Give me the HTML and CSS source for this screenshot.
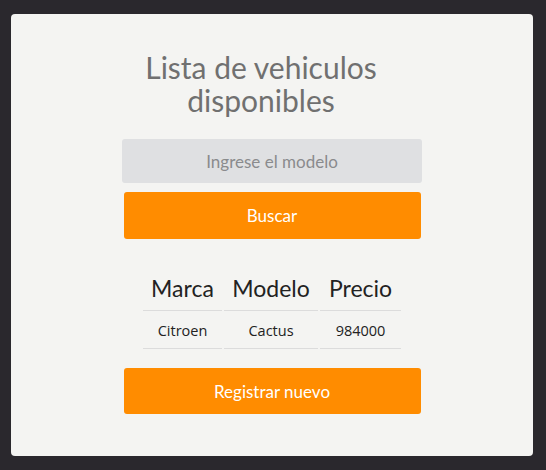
FILE: index.html
```html
<!DOCTYPE html>
<html lang="es">
<head>
<meta charset="utf-8">
<title>Lista de vehiculos</title>
<link rel="stylesheet" href="styles.css">
</head>
<body>
<main class="card">
  <h1 class="title">Lista de vehiculos disponibles</h1>
  <input class="search" type="text" placeholder="Ingrese el modelo">
  <button class="btn btn-search">Buscar</button>
  <table class="list">
    <thead>
      <tr><th class="c1">Marca</th><th class="c2">Modelo</th><th class="c3">Precio</th></tr>
    </thead>
    <tbody>
      <tr><td>Citroen</td><td>Cactus</td><td>984000</td></tr>
    </tbody>
  </table>
  <button class="btn btn-new">Registrar nuevo</button>
</main>
</body>
</html>
```
FILE: styles.css
```css
html, body {
  margin: 0;
  padding: 0;
  background: #2a282d;
}
body {
  padding: 14px 13px 14px 11px;
  font-family: "Lato", "Open Sans", sans-serif;
}
.card {
  background: #f4f4f2;
  border-radius: 4px;
  height: 442px;
  box-sizing: border-box;
  padding-top: 37px;
  display: flex;
  flex-direction: column;
  align-items: center;
}
.title {
  margin: 0;
  width: 300px;
  padding-right: 22px;
  text-align: center;
  font-weight: 400;
  font-size: 30px;
  line-height: 33px;
  color: #707070;
}
.search {
  margin-top: 22px;
  width: 300px;
  height: 44px;
  box-sizing: border-box;
  border: none;
  border-radius: 3px;
  background: #dfe0e2;
  text-align: center;
  font-family: inherit;
  font-size: 17px;
  color: #555;
  outline: none;
}
.search::placeholder {
  color: #8a8b8d;
}
.btn {
  width: 297px;
  border: none;
  border-radius: 3px;
  background: #ff8c00;
  color: #ffffff;
  font-family: inherit;
  font-size: 17px;
  cursor: pointer;
}
.btn-search {
  margin-top: 9px;
  height: 47px;
}
.list {
  margin-top: 27px;
  border-spacing: 2px;
  color: #222;
}
.list th {
  font-weight: 400;
  font-size: 23px;
  line-height: 26px;
  padding: 7px 0 9px;
  border-bottom: 1px solid #dcdcdc;
}
.list td {
  font-family: "Open Sans", sans-serif;
  font-size: 14.5px;
  line-height: 19px;
  padding: 8px 0;
  text-align: center;
  border-bottom: 1px solid #dcdcdc;
}
.c1 { width: 79px; }
.c2 { width: 94px; }
.c3 { width: 81px; }
.btn-new {
  margin-top: 17px;
  height: 46px;
}
```
